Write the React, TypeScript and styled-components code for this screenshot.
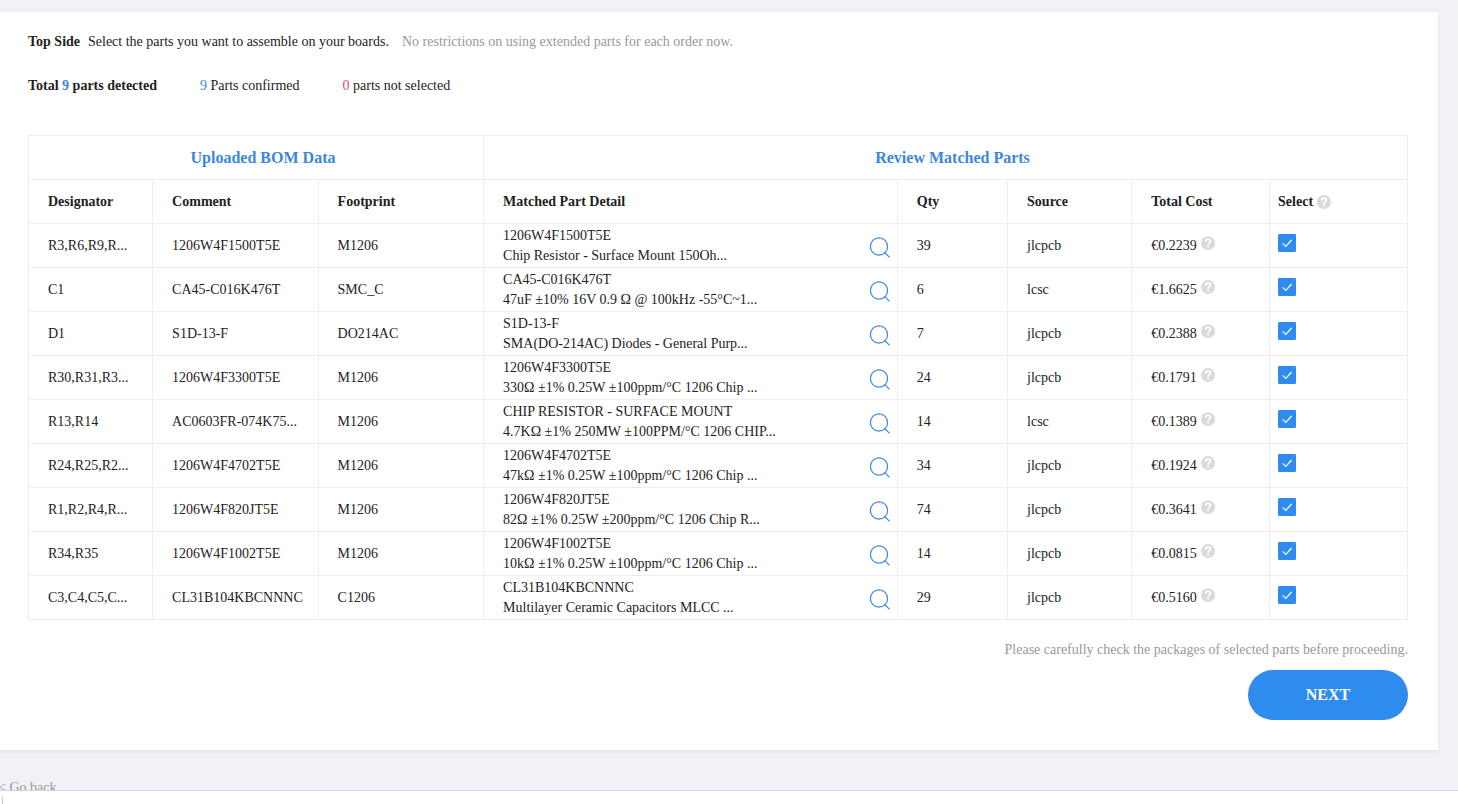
import React, { useState } from "react";
import styled, { createGlobalStyle } from "styled-components";

const blue = "#3b87dd";
const primary = "#2d8cee";
const line = "#ebeef5";

const GlobalStyle = createGlobalStyle`
  *, *::before, *::after { box-sizing: border-box; }
  body {
    margin: 0;
    background: #f1f2f7;
    color: #222;
    font-family: "Liberation Serif", "Times New Roman", serif;
    font-size: 14px;
    line-height: 20px;
  }
`;

const Page = styled.div`
  display: flex;
  flex-direction: column;
  height: 100vh;
`;

const Content = styled.main`
  flex: 1;
  min-height: 0;
  overflow: hidden;
  padding: 12px 20px 0 0;
  margin-left: -2px;
`;

const Card = styled.section`
  padding: 20px 30px 30px;
  background: #fff;
  box-shadow: 0 2px 4px rgba(60, 70, 100, 0.08);
`;

const Intro = styled.p`
  display: flex;
  gap: 8px;
  margin: 0;
`;

const Muted = styled.span`
  color: #999;
`;

const Restriction = styled(Muted)`
  padding-left: 5px;
`;

const Summary = styled.div`
  display: flex;
  gap: 43px;
  margin: 24px 0 39px;
`;

const Count = styled.span<{ $tone?: "blue" | "red" }>`
  color: ${(p) => (p.$tone === "red" ? "#d9487c" : blue)};
`;

const Table = styled.table`
  width: 100%;
  table-layout: fixed;
  border-collapse: separate;
  border-spacing: 0;
  border-top: 1px solid ${line};
  border-left: 1px solid ${line};
  font-size: 14px;
`;

const Col = styled.col<{ $share: number }>`
  width: ${(p) => p.$share}%;
`;

const GroupHead = styled.th`
  height: 44px;
  padding: 0 0 0 14px;
  border-right: 1px solid ${line};
  border-bottom: 1px solid ${line};
  color: ${blue};
  font-size: 16px;
  text-align: center;
`;

const Head = styled.th<{ $tight?: boolean }>`
  height: 44px;
  padding: 0 0 0 ${(p) => (p.$tight ? 8 : 19)}px;
  border-right: 1px solid ${line};
  border-bottom: 1px solid ${line};
  text-align: left;
  white-space: nowrap;
`;

const Cell = styled.td<{ $tight?: boolean }>`
  height: 44px;
  padding: 0 0 0 ${(p) => (p.$tight ? 8 : 19)}px;
  border-right: 1px solid ${line};
  border-bottom: 1px solid ${line};
  white-space: nowrap;
`;

const Detail = styled.div`
  display: flex;
  align-items: center;
  justify-content: space-between;
  padding-right: 7px;
`;

const DetailLine = styled.div`
  line-height: 20px;
`;

const SearchButton = styled.button`
  display: flex;
  padding: 2px 0 0;
  border: 0;
  background: none;
  cursor: pointer;
`;

const WithHelp = styled.div<{ $raised?: boolean }>`
  display: flex;
  align-items: center;
  gap: 4px;

  svg {
    margin-bottom: ${(p) => (p.$raised ? 5 : 0)}px;
  }
`;

const CheckLabel = styled.label`
  display: grid;
  width: 18px;
  margin-bottom: 6px;

  > * {
    grid-area: 1 / 1;
  }

  svg {
    pointer-events: none;
  }
`;

const CheckInput = styled.input`
  appearance: none;
  width: 18px;
  height: 18px;
  margin: 0;
  border: 1px solid #c5cad5;
  border-radius: 1px;
  background: #fff;
  cursor: pointer;

  &:checked {
    border-color: ${primary};
    background: ${primary};
  }
`;

const Actions = styled.div`
  display: flex;
  flex-direction: column;
  align-items: flex-end;
  gap: 10px;
  padding-top: 20px;
`;

const NextButton = styled.button`
  width: 160px;
  height: 50px;
  border: 0;
  border-radius: 25px;
  background: ${primary};
  color: #fff;
  font: bold 16px/20px "Liberation Serif", "Times New Roman", serif;
  cursor: pointer;
`;

const BackLink = styled.a`
  display: inline-block;
  margin-top: 28px;
  color: #999;
  text-decoration: none;
`;

const BottomBar = styled.footer`
  flex: none;
  height: 14px;
  padding: 6px 0 0 2px;
  border-top: 1px solid #d3d5d9;
  background: #fff;
`;

const Divider = styled.div`
  width: 1px;
  height: 7px;
  background: #c4c4c4;
`;

function HelpIcon() {
  return (
    <svg width="14" height="14" viewBox="0 0 14 14" role="img" aria-label="Help">
      <circle cx="7" cy="7" r="7" fill="#dadada" />
      <path
        d="M4.600 5.500C4.600 4 5.600 3.200 7 3.200s2.400.8 2.400 2C9.400 6.600 7.100 6.700 7.100 8.700"
        fill="none"
        stroke="#fff"
        strokeWidth="1.800"
      />
      <rect x="6.200" y="9.500" width="1.800" height="1.800" fill="#fff" />
    </svg>
  );
}

function SearchIcon() {
  return (
    <svg width="22" height="22" viewBox="0 0 22 22" fill="none" stroke={blue} strokeWidth="1.200">
      <circle cx="11" cy="10.500" r="8.600" />
      <path d="M16.400 16.200L21.600 21.400" />
    </svg>
  );
}

interface Part {
  designator: string;
  comment: string;
  footprint: string;
  name: string;
  description: string;
  qty: number;
  source: string;
  cost: string;
}

const parts: Part[] = [
  { designator: "R3,R6,R9,R...", comment: "1206W4F1500T5E", footprint: "M1206", name: "1206W4F1500T5E", description: "Chip Resistor - Surface Mount 150Oh...", qty: 39, source: "jlcpcb", cost: "€0.2239" },
  { designator: "C1", comment: "CA45-C016K476T", footprint: "SMC_C", name: "CA45-C016K476T", description: "47uF ±10% 16V 0.9 Ω @ 100kHz -55°C~1...", qty: 6, source: "lcsc", cost: "€1.6625" },
  { designator: "D1", comment: "S1D-13-F", footprint: "DO214AC", name: "S1D-13-F", description: "SMA(DO-214AC) Diodes - General Purp...", qty: 7, source: "jlcpcb", cost: "€0.2388" },
  { designator: "R30,R31,R3...", comment: "1206W4F3300T5E", footprint: "M1206", name: "1206W4F3300T5E", description: "330Ω ±1% 0.25W ±100ppm/°C 1206 Chip ...", qty: 24, source: "jlcpcb", cost: "€0.1791" },
  { designator: "R13,R14", comment: "AC0603FR-074K75...", footprint: "M1206", name: "CHIP RESISTOR - SURFACE MOUNT", description: "4.7KΩ ±1% 250MW ±100PPM/°C 1206 CHIP...", qty: 14, source: "lcsc", cost: "€0.1389" },
  { designator: "R24,R25,R2...", comment: "1206W4F4702T5E", footprint: "M1206", name: "1206W4F4702T5E", description: "47kΩ ±1% 0.25W ±100ppm/°C 1206 Chip ...", qty: 34, source: "jlcpcb", cost: "€0.1924" },
  { designator: "R1,R2,R4,R...", comment: "1206W4F820JT5E", footprint: "M1206", name: "1206W4F820JT5E", description: "82Ω ±1% 0.25W ±200ppm/°C 1206 Chip R...", qty: 74, source: "jlcpcb", cost: "€0.3641" },
  { designator: "R34,R35", comment: "1206W4F1002T5E", footprint: "M1206", name: "1206W4F1002T5E", description: "10kΩ ±1% 0.25W ±100ppm/°C 1206 Chip ...", qty: 14, source: "jlcpcb", cost: "€0.0815" },
  { designator: "C3,C4,C5,C...", comment: "CL31B104KBCNNNC", footprint: "C1206", name: "CL31B104KBCNNNC", description: "Multilayer Ceramic Capacitors MLCC ...", qty: 29, source: "jlcpcb", cost: "€0.5160" },
];

const columnShares = [9, 12, 12, 30, 8, 9, 10, 10];

function PartRow({ part, checked, onToggle }: { part: Part; checked: boolean; onToggle: () => void }) {
  return (
    <tr>
      <Cell>{part.designator}</Cell>
      <Cell>{part.comment}</Cell>
      <Cell>{part.footprint}</Cell>
      <Cell>
        <Detail>
          <div>
            <DetailLine>{part.name}</DetailLine>
            <DetailLine>{part.description}</DetailLine>
          </div>
          <SearchButton type="button" aria-label={`Search ${part.name}`}>
            <SearchIcon />
          </SearchButton>
        </Detail>
      </Cell>
      <Cell>{part.qty}</Cell>
      <Cell>{part.source}</Cell>
      <Cell>
        <WithHelp $raised>
          {part.cost}
          <HelpIcon />
        </WithHelp>
      </Cell>
      <Cell $tight>
        <CheckLabel>
          <CheckInput type="checkbox" aria-label={`Select ${part.name}`} checked={checked} onChange={onToggle} />
          <svg width="18" height="18" viewBox="0 0 18 18" fill="none" stroke="#fff" strokeWidth="1.200">
            <path d="M4.700 9.300L7.800 12.400L13.600 6" />
          </svg>
        </CheckLabel>
      </Cell>
    </tr>
  );
}

export default function App() {
  const [selected, setSelected] = useState<boolean[]>(parts.map(() => true));
  const confirmed = selected.filter(Boolean).length;

  const toggle = (index: number) =>
    setSelected((current) => current.map((value, i) => (i === index ? !value : value)));

  return (
    <Page>
      <GlobalStyle />
      <Content>
        <Card>
          <Intro>
            <strong>Top Side</strong>
            <span>Select the parts you want to assemble on your boards.</span>
            <Restriction>No restrictions on using extended parts for each order now.</Restriction>
          </Intro>
          <Summary>
            <strong>
              Total <Count>{parts.length}</Count> parts detected
            </strong>
            <span>
              <Count>{confirmed}</Count> Parts confirmed
            </span>
            <span>
              <Count $tone="red">{parts.length - confirmed}</Count> parts not selected
            </span>
          </Summary>
          <Table>
            <colgroup>
              {columnShares.map((share, i) => (
                <Col key={i} $share={share} />
              ))}
            </colgroup>
            <thead>
              <tr>
                <GroupHead colSpan={3} scope="colgroup">Uploaded BOM Data</GroupHead>
                <GroupHead colSpan={5} scope="colgroup">Review Matched Parts</GroupHead>
              </tr>
              <tr>
                <Head scope="col">Designator</Head>
                <Head scope="col">Comment</Head>
                <Head scope="col">Footprint</Head>
                <Head scope="col">Matched Part Detail</Head>
                <Head scope="col">Qty</Head>
                <Head scope="col">Source</Head>
                <Head scope="col">Total Cost</Head>
                <Head scope="col" $tight>
                  <WithHelp>
                    Select
                    <HelpIcon />
                  </WithHelp>
                </Head>
              </tr>
            </thead>
            <tbody>
              {parts.map((part, i) => (
                <PartRow key={part.name} part={part} checked={selected[i]} onToggle={() => toggle(i)} />
              ))}
            </tbody>
          </Table>
          <Actions>
            <Muted>Please carefully check the packages of selected parts before proceeding.</Muted>
            <NextButton type="button">NEXT</NextButton>
          </Actions>
        </Card>
        <BackLink href="#back">&lt; Go back</BackLink>
      </Content>
      <BottomBar>
        <Divider />
      </BottomBar>
    </Page>
  );
}
